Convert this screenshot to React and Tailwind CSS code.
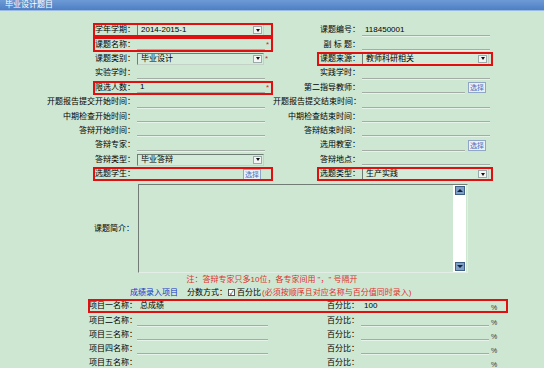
import React from "react";

const FONT = "font-['Liberation_Sans','Noto_Sans_CJK_SC',sans-serif]";

const RedBox = ({ className }) => (
  <div className={`pointer-events-none absolute border-2 border-[#e01010] ${className}`} />
);

const Line = ({ children, w = "w-[128px]" }) => (
  <div className={`${w} h-[11px] border-b border-[#a3aca5] shadow-[0_1px_0_#e6f3e8] flex items-center pl-[3px] text-[8px] text-[#000]`}>
    {children}
  </div>
);

const Select = ({ value, w = "w-[127px]" }) => (
  <div className={`${w} h-[12px] border border-[#6f7e74] border-r-[#c3d1c7] border-b-[#c3d1c7] bg-[#d3ebd8] flex items-center justify-between pl-[3px] pr-[1px]`}>
    <span className="text-[8px] leading-none text-[#000]">{value}</span>
    <span className="w-[9px] h-[8px] bg-[#f4f4f4] border border-[#9aa] flex items-center justify-center">
      <span className="w-0 h-0 border-l-[2.5px] border-r-[2.5px] border-t-[3px] border-l-transparent border-r-transparent border-t-[#111]" />
    </span>
  </div>
);

const PickBtn = () => (
  <span className="w-[18px] h-[11px] border border-[#8fa6c4] bg-[#e9f0fa] text-[#4d6fb3] text-[7px] leading-none flex items-center justify-center">
    选择
  </span>
);

const Star = ({ on }) => (
  <span className="w-[6px] text-[8px] text-[#e02020] leading-none pl-[1px]">{on ? "*" : ""}</span>
);

const rows = [
  { l: "学年学期：", lf: <Select value="2014-2015-1" />, lbox: true, r: "课题编号：", rf: <Line>118450001</Line> },
  { l: "课题名称：", lf: <Line />, star: true, lbox: true, r: "副 标 题：", rf: <Line /> },
  { l: "课题类别：", lf: <Select value="毕业设计" />, star: true, r: "课题来源：", rf: <Select value="教师科研相关" />, rbox: true },
  { l: "实验学时：", lf: <Line />, r: "实践学时：", rf: <Line /> },
  { l: "限选人数：", lf: <Line>1</Line>, star: true, lbox: true, r: "第二指导教师：", rf: <div className="flex items-center gap-[3px]"><Line w="w-[103px]" /><PickBtn /></div> },
  { l: "开题报告提交开始时间：", lf: <Line />, r: "开题报告提交结束时间：", rf: <Line /> },
  { l: "中期检查开始时间：", lf: <Line />, r: "中期检查结束时间：", rf: <Line /> },
  { l: "答辩开始时间：", lf: <Line />, r: "答辩结束时间：", rf: <Line /> },
  { l: "答辩专家：", lf: <Line />, r: "选用教室：", rf: <div className="flex items-center gap-[3px]"><Line w="w-[103px]" /><PickBtn /></div> },
  { l: "答辩类型：", lf: <Select value="毕业答辩" />, r: "答辩地点：", rf: <Line /> },
  { l: "选题学生：", lf: <div className="flex items-center gap-[3px]"><Line w="w-[103px]" /><PickBtn /></div>, lbox: true, r: "选题类型：", rf: <Select value="生产实践" />, rbox: true },
];

const items = [
  { name: "项目一名称：", v: "总成绩", pct: "100", box: true },
  { name: "项目二名称：" },
  { name: "项目三名称：" },
  { name: "项目四名称：" },
  { name: "项目五名称：" },
];

const ScrollArrow = ({ up }) => (
  <span className="w-[10px] h-[9px] bg-[#7f9fc4] border border-[#3e5f86] flex items-center justify-center">
    <span
      className={
        up
          ? "w-0 h-0 border-l-[3px] border-r-[3px] border-b-[3px] border-l-transparent border-r-transparent border-b-[#10223a]"
          : "w-0 h-0 border-l-[3px] border-r-[3px] border-t-[3px] border-l-transparent border-r-transparent border-t-[#10223a]"
      }
    />
  </span>
);

export default function App() {
  return (
    <div className={`w-[544px] h-[368px] overflow-hidden bg-[#cde7d3] ${FONT} text-[#000]`}>
      <div className="h-[11px] bg-gradient-to-b from-[#6d9bd6] to-[#4d7fc3] border-b border-[#9cbbe2] flex items-center pl-[5px]">
        <span className="text-[8px] leading-none text-white">毕业设计题目</span>
      </div>

      <div className="mt-[12px]">
        {rows.map((row, i) => (
          <div key={i} className="flex h-[14.4px]">
            <div className="relative w-[273px] flex items-center">
              <span className="w-[137px] pr-[2px] text-right text-[8px] leading-none whitespace-nowrap">{row.l}</span>
              {row.lf}
              <Star on={row.star} />
              {row.lbox && <RedBox className="left-[93px] right-0 top-0 bottom-0" />}
            </div>
            <div className="relative w-[222px] flex items-center">
              <span className="w-[89px] pr-[2px] text-right text-[8px] leading-none whitespace-nowrap">{row.r}</span>
              {row.rf}
              {row.rbox && <RedBox className="left-[44px] right-[2px] top-0 bottom-0" />}
            </div>
          </div>
        ))}
      </div>

      <div className="flex h-[89px] mt-[3px]">
        <div className="w-[138px] flex items-center justify-end pr-[4px] text-[8px] leading-none">课题简介：</div>
        <div className="w-[330px] border border-[#707c74] border-r-[#e3efe6] border-b-[#e3efe6] flex justify-end">
          <div className="w-[13px] bg-white flex flex-col justify-between items-center py-[1px] mr-[1px]">
            <ScrollArrow up />
            <ScrollArrow />
          </div>
        </div>
      </div>

      <div className="h-[13px] flex items-center justify-center text-[8px] leading-none text-[#e0302a] whitespace-pre">
        注：答辩专家只多10位，各专家间用 "，" 号隔开
      </div>

      <div className="h-[13px] flex items-center pl-[130px] text-[8px] leading-none whitespace-nowrap">
        <span className="text-[#2030c8]">成绩录入项目</span>
        <span className="ml-[9px]">分数方式：</span>
        <span className="ml-[1px] w-[7px] h-[7px] bg-white border border-[#555] flex items-center justify-center text-[6px] leading-none">✓</span>
        <span className="ml-[2px]">百分比</span>
        <span className="ml-[1px] text-[#e0302a]">(必须按顺序且对应名称与百分值同时录入)</span>
      </div>

      <div>
        {items.map((it, i) => (
          <div key={i} className="relative flex items-center h-[14.2px]">
            <span className="w-[137px] text-right text-[8px] leading-none whitespace-nowrap">{it.name}</span>
            <Line w="w-[131px]">{it.v}</Line>
            <span className="w-[93px] pr-[2px] text-right text-[8px] leading-none">百分比：</span>
            <Line w="w-[128px]">{it.pct}</Line>
            <span className="ml-[2px] text-[7px] leading-none text-[#333] pt-[3px]">%</span>
            {it.box && <RedBox className="left-[88px] w-[420px] top-0 bottom-0" />}
          </div>
        ))}
      </div>
    </div>
  );
}
